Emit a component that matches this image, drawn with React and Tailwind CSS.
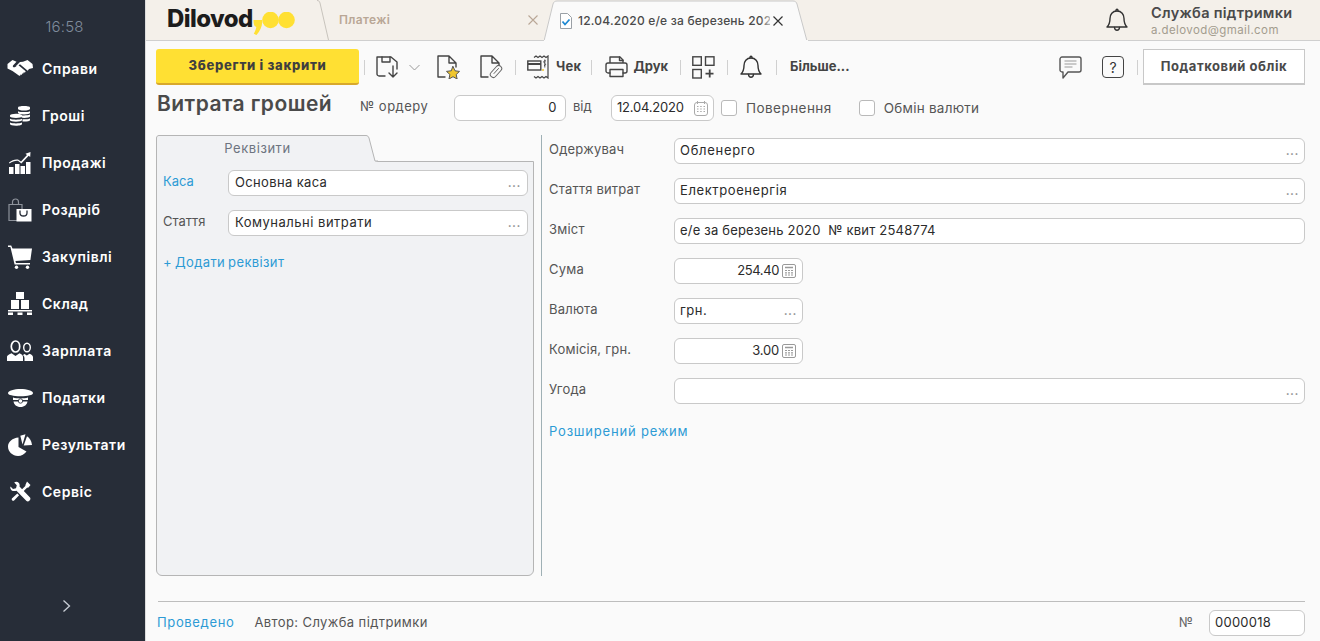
import React from "react";

const S = { fill: "none", stroke: "currentColor", strokeWidth: 1.4, strokeLinecap: "round", strokeLinejoin: "round" };

const Handshake = () => (
  <svg width="26" height="20" viewBox="0 0 26 20" fill="#fff">
    <path d="M.5 5 5.500 1l4 1.800L6 6.500c-.7 1 .5 2.300 1.800 1.700l3.400-2.200 7.200 6.100c.6.8-.3 1.800-1.200 1.300l-.6-.4c.5 1-.5 1.900-1.400 1.400.2 1-.8 1.600-1.700 1.200.1.800-.6 1.300-1.300 1.200L5.500 12 .5 9.500z" />
    <path d="M25.500 5 20.500 1l-4.500 1.800-3 .3-4 4c.8.5 1.500 0 2-.4l2-1.400 7.700 6.400 1.300-1.600 4-1z" />
  </svg>
);
const Coins = () => (
  <svg width="22" height="20" viewBox="0 0 22 20" fill="#fff">
    <path d="M9 1.500C9 .5 12 0 15 0s6 .5 6 1.500V3c0 .8-2.700 1.500-6 1.500S9 3.800 9 3z" />
    <path d="M9 5.200c1.500.6 3.700.9 6 .9s4.700-.3 6-.9v1.800c0 .8-2.700 1.400-6 1.400S9 7.800 9 7zM12 9.300c1 .1 2 .2 3 .2 2.300 0 4.700-.3 6-.9v1.900c0 .8-2.700 1.400-6 1.400-.8 0-1.500 0-2.200-.1zM13.500 13.300h1.500c2.300 0 4.700-.3 6-.9v1.800c0 .8-2.700 1.400-6 1.400h-1.500z" />
    <path d="M1 9.500c0-1 2.700-1.700 6-1.700s6 .7 6 1.700v1c0 .8-2.700 1.400-6 1.400s-6-.6-6-1.400zM1 12.800c1.400.6 3.700.9 6 .9s4.600-.3 6-.9v1.500c0 .8-2.700 1.400-6 1.400s-6-.6-6-1.400zM1 16.500c1.400.6 3.700.9 6 .9s4.600-.3 6-.9v1.500c0 1-2.700 1.700-6 1.700S1 19 1 18z" />
  </svg>
);
const Chart = () => (
  <svg width="22" height="22" viewBox="0 0 22 22" fill="#fff">
    <rect x="0" y="15" width="4.500" height="7" />
    <rect x="6" y="12" width="4.500" height="10" />
    <rect x="11.500" y="14" width="4.500" height="8" />
    <rect x="17" y="10" width="4.500" height="12" />
    <path d="M0 10.500c3-2.500 6-3.500 9-3l3 2 6-6.500-1.500-1.200L21.500 0l-.3 5-1.500-1.200-7.400 7.600-3.300-2.600c-3-.3-5.500.6-8.500 2.700z" />
  </svg>
);
const Bag = () => (
  <svg width="24" height="24" viewBox="0 0 24 24">
    <path d="M1 6.500h13v16H1zM4.500 6.500V4c0-4 6-4 6 0v2.500" fill="none" stroke="#8d929b" strokeWidth="1.200" />
    <rect x="8.500" y="11" width="15" height="12.500" fill="#fff" />
    <path d="M12 12.500v2.500c0 4 7 4 7 0v-2.500" fill="none" stroke="#272d38" strokeWidth="1.300" />
  </svg>
);
const Cart = () => (
  <svg width="24" height="24" viewBox="0 0 24 24" fill="#fff">
    <path d="M0 .5h3.200l1.300 3H24l-1.600 11.500-15 1 .6 2h14v1.500H6.600L2.400 2H0z" />
    <circle cx="8.500" cy="22.300" r="1.700" /><circle cx="19.500" cy="22.300" r="1.700" />
  </svg>
);
const Boxes = () => (
  <svg width="24" height="23" viewBox="0 0 24 23" fill="#fff">
    <rect x="8" y="0" width="8" height="7" />
    <rect x="3" y="8" width="8" height="9" />
    <rect x="13" y="8" width="8" height="9" />
    <rect x="0" y="18" width="24" height="1.500" />
    <path d="M0 20.500h5V23H0zM9.500 20.500h5V23h-5zM19 20.500h5V23h-5z" />
  </svg>
);
const People = () => (
  <svg width="26" height="21" viewBox="0 0 26 21">
    <path d="M0 21v-4c0-2 3-3 4.500-3.800L8.500 16l4-2.800c2 .8 3.500 2 3.500 3.800v4z" fill="#fff" />
    <ellipse cx="8.500" cy="6.500" rx="4.200" ry="5.500" fill="none" stroke="#fff" strokeWidth="1.700" />
    <path d="M17.500 21H26v-4c0-1.500-2-2.500-3.500-3.200l-2.700 1.800-2.300-1.500-1.500.9c1 1 1.500 2 1.500 3z" fill="#fff" />
    <ellipse cx="20" cy="7.500" rx="3.300" ry="4.300" fill="none" stroke="#fff" strokeWidth="1.400" />
  </svg>
);
const Cap = () => (
  <svg width="25" height="18" viewBox="0 0 25 18" fill="#fff">
    <path d="M12.500 0C19 0 25 1.800 25 4.200c0 1.600-5 3-12.500 3S0 5.800 0 4.200C0 1.800 6 0 12.500 0z" />
    <path d="M5 8.500c2 .6 4.700.9 7.500.9s5.500-.3 7.500-.9V11H5zM5.500 12.500h14c-.5 3-3 5.500-7 5.500s-6.500-2.500-7-5.500z" />
    <circle cx="12.500" cy="12" r="2.200" stroke="#272d38" strokeWidth=".8" />
  </svg>
);
const Pie = () => (
  <svg width="24" height="22" viewBox="0 0 24 22" fill="#fff">
    <path d="M10.500 3.500v9.500l8 4.500C16.500 20.200 13.500 22 10 22 4.500 22 0 17.700 0 12.500 0 8 4.500 3.800 10.500 3.500z" />
    <path d="M12.300 1.800 17.500.2 14.500 10.500z" /><path d="M19 2.300c2.700 1.700 4.500 4.500 5 8.700l-8.300.5z" />
  </svg>
);
const Tools = () => (
  <svg width="22" height="22" viewBox="0 0 22 22" fill="#fff">
    <path d="M1.500 5.500 4 8l3-.8.800-3L5.200 1.500C8-.5 11.500 2 10.500 5.500L21 16.500c1.500 2-1.500 5-3.500 3.500L7.500 9.700C3.500 11 .5 8.500 1.500 5.500z" />
    <path d="m18 .5 3.500 3.500-2 2.500-1.500.3-4.500 4.500-1.700-1.700 4.500-4.500.3-1.500zM8.300 12.500l1.800 1.800-5 5.200c-1 1-3.200-.9-2.200-2.100z" />
  </svg>
);

const nav = [
  ["Справи", Handshake], ["Гроші", Coins], ["Продажі", Chart], ["Роздріб", Bag], ["Закупівлі", Cart],
  ["Склад", Boxes], ["Зарплата", People], ["Податки", Cap], ["Результати", Pie], ["Сервіс", Tools],
];

const Sep = ({ c = "" }) => <span className={"w-px h-[15px] bg-[#d0d0d0] shrink-0 " + c} />;

const Dots = () => <span className="ml-auto text-[#8a8a8a] text-[13px] leading-none tracking-[0.5px] pb-[1px] font-medium">...</span>;

const Calc = () => (
  <svg width="14" height="14" viewBox="0 0 14 14" className="shrink-0 text-[#9a9a9a]" fill="none" stroke="currentColor">
    <rect x=".5" y=".5" width="13" height="13" rx="1.500" />
    <path d="M3 3.500h8" strokeWidth="1.500" />
    <path d="M3 6.500h2M6 6.500h2M9 6.500h2M3 8.800h2M6 8.800h2M9 8.800h2M3 11h2M6 11h2M9 11h2" strokeWidth="1.200" />
  </svg>
);

const Field = ({ w, children, className = "", track = "tracking-[0.5px]" }) => (
  <div className={"h-[26px] shrink-0 flex items-center rounded-[6px] border border-[#c9c9c9] bg-white text-[13px] text-[#2b2b2b] " + track + " " + w + " " + className}>{children}</div>
);

const Row = ({ label, children }) => (
  <div className="flex items-center h-[26px] mb-[14px]">
    <span className="w-[125px] shrink-0 text-[13px] text-[#555] tracking-[0.2px] -mt-[3px]">{label}</span>
    {children}
  </div>
);

const Check = ({ label, c, t }) => (
  <label className={"flex items-center " + c}>
    <span className="w-[16px] h-[16px] rounded-[3px] border border-[#b9b9b9] bg-white" />
    <span className={"ml-[9px] text-[13.500px] text-[#555] " + t}>{label}</span>
  </label>
);

const Bell = ({ size = 22 }) => (
  <svg width={size} height={size + 2} viewBox="0 0 22 24" {...S} className="text-[#333] shrink-0">
    <path d="M11 3C6.500 3 4 6.500 4 10.500c0 4.500-1 6.500-3 8.500h20c-2-2-3-4-3-8.500C18 6.500 15.500 3 11 3z" />
    <path d="M10 2.800c-.3-2 2.300-2 2 0M8.500 19.500c.3 3.600 4.700 3.600 5 0" />
  </svg>
);

const Tb = ({ children, c = "" }) => <span className={"flex items-center text-[13px] font-bold text-[#444] shrink-0 " + c}>{children}</span>;

export default function App() {
  return (
    <div className="flex w-[1320px] h-[641px] overflow-hidden bg-[#fafafa] [font-family:Inter,sans-serif]">
      <aside className="w-[145px] shrink-0 h-full bg-[#272d38] flex flex-col">
        <div className="h-[45px] pt-[16px] pr-[16px] text-center text-[15px] leading-[22px] font-light text-[#7f8b9b] tracking-[0.2px]">16:58</div>
        {nav.map(([t, I]) => (
          <div key={t} className="h-[47px] flex items-center shrink-0">
            <span className="w-[42px] pl-[7px] pr-[9px] flex justify-center shrink-0"><I /></span>
            <span className="text-[14px] font-semibold text-white tracking-[0.55px]">{t}</span>
          </div>
        ))}
        <div className="mt-auto mb-[28px] pl-[62px] text-[#c9ced6]">
          <svg width="9" height="14" viewBox="0 0 9 14" fill="none" stroke="currentColor" strokeWidth="1.300"><path d="m1.500 1.500 6 5.500-6 5.500" /></svg>
        </div>
      </aside>

      <main className="flex-1 min-w-0 flex flex-col border-l border-[#dcdcdc]">
        <header className="h-[41px] shrink-0 relative flex bg-[#f4f0ea] border-b border-[#cfcfcf]">
          <div className="relative w-[177px] shrink-0 pl-[21px] flex items-center">
            <span className="text-[24px] font-extrabold text-[#1c1c1c] tracking-[-0.6px] leading-none -mt-[2px]">Dilovod</span>
            <svg width="44" height="24" viewBox="0 0 44 24" className="mt-[8px] shrink-0" fill="#ffe033">
              <path d="M.5 8h8.500c.8 5-1.500 11-5.500 15L.8 21.800C2.300 19 3 17 3.300 15 1 14.500.5 11 .5 8z" />
              <ellipse cx="17.500" cy="8" rx="8.300" ry="8.300" /><ellipse cx="33.500" cy="8" rx="8.300" ry="8.300" />
            </svg>
            <svg width="14" height="41" viewBox="0 0 14 41" className="absolute left-[171px] top-0" fill="none" stroke="#c8c4bd"><path d="M0 .5c2 0 2.500 1 3 2.500l8.500 37" /></svg>
          </div>
          <div className="w-[221px] shrink-0 flex items-center pl-[16px] text-[12px] font-semibold text-[#b9a796] tracking-[0.35px]">
            <span>Платежі</span>
            <svg width="10" height="10" viewBox="0 0 10 10" className="ml-auto mr-[6px] text-[#b9a796]" stroke="currentColor" strokeWidth="1.100"><path d="m.5.5 9 9M9.500.5l-9 9" /></svg>
          </div>
          <div className="relative w-[264px] shrink-0 flex items-center pl-[16px] h-[41px]">
            <svg width="264" height="41" viewBox="0 0 264 41" className="absolute left-0 top-0">
              <path d="M0 41 9 4c.5-2 2-3 4-3h236c2 0 3.500 1 4 3l10 37z" fill="#fafafa" stroke="#c8c8c8" />
              <rect x="0" y="40" width="264" height="1" fill="#fafafa" />
            </svg>
            <svg width="12" height="16" viewBox="0 0 12 16" className="relative shrink-0 mt-[1px]" fill="none">
              <path d="M.5.5h7l4 4v11H.5z" fill="#fff" stroke="#9aa0a6" />
              <path d="m2.500 8.500 2.500 3 4.500-5" stroke="#1e88d2" strokeWidth="1.800" />
            </svg>
            <span className="relative ml-[6px] w-[192px] overflow-hidden whitespace-nowrap text-[12px] font-medium text-[#4a4a4a] tracking-[0.2px]">12.04.2020 е/е за березень 2020</span>
            <span className="absolute left-[216px] top-[10px] w-[16px] h-[20px] bg-gradient-to-r from-transparent to-[#fafafa]" />
            <svg width="10" height="10" viewBox="0 0 10 10" className="relative ml-[3px] mt-[1px] text-[#333]" stroke="currentColor" strokeWidth="1.200"><path d="m.5.5 9 9M9.500.5l-9 9" /></svg>
          </div>
          <div className="ml-auto flex items-center shrink-0 pr-[29px]">
            <Bell />
            <div className="ml-[23px] w-[140px] flex flex-col -mt-[1px]">
              <span className="text-[14.500px] leading-[20px] font-semibold text-[#4a4a4a] tracking-[0.3px] whitespace-nowrap">Служба підтримки</span>
              <span className="text-[11.500px] leading-[14px] text-[#a39c8e] tracking-[0.4px]">a.delovod@gmail.com</span>
            </div>
          </div>
        </header>

        <div className="h-[50px] shrink-0 flex items-start pt-[8px] pl-[10px] pr-[15px]">
          <button className="w-[203px] h-[36px] shrink-0 rounded-[3px] bg-[#ffe033] border-b-2 border-[#d8a82c] text-[13px] font-extrabold text-[#3f3f3f] tracking-[0.7px]">Зберегти і закрити</button>
          <div className="h-[36px] flex items-center flex-1">
            <Sep c="ml-[5px]" />
            <svg width="24" height="24" viewBox="0 0 24 24" {...S} className="ml-[11px] text-[#444] shrink-0">
              <path d="M9 21H3c-1 0-2-1-2-2V2h14l6 5v7" /><path d="M6 2v5h8V2" /><path d="M17 11v11m-4-4 4 4 4-4" />
            </svg>
            <svg width="11" height="7" viewBox="0 0 11 7" fill="none" stroke="#999" className="ml-[9px] shrink-0"><path d="m.5 1 5 5 5-5" /></svg>
            <svg width="23" height="24" viewBox="0 0 23 24" {...S} className="ml-[17px] text-[#444] shrink-0">
              <path d="M8 22H1V1h11l7 7v4M12 1v7h7" />
              <path d="m16 11.500 2 4.300 4.500.6-3.300 3.100.9 4.500-4.100-2.300-4 2.300.9-4.500-3.400-3.100 4.500-.6z" fill="#f0c62d" stroke="#555" strokeWidth="1" />
            </svg>
            <svg width="23" height="24" viewBox="0 0 23 24" {...S} className="ml-[20px] text-[#444] shrink-0">
              <path d="M8 22H1V1h11l7 7v2M12 1v7h7" />
              <rect x="13" y="9.500" width="6" height="14" rx="3" transform="rotate(42 16 16.500)" fill="#fafafa" stroke="#666" strokeWidth="1" />
              <path d="m18.500 13.500-4.500 5" stroke="#666" strokeWidth="1" />
            </svg>
            <Sep c="ml-[12px]" />
            <svg width="24" height="24" viewBox="0 0 24 24" className="ml-[11px] shrink-0" fill="none" stroke="#444" strokeWidth="1.200">
              <path d="M7 2.500 9 1l2 1.500L13 1l2 1.500L17 1l2 1.500L21 1v22l-2-1.500-2 1.500-2-1.500-2 1.500-2-1.500-2 1.500-2-1.500" />
              <rect x=".8" y="6" width="13" height="9" fill="#fafafa" strokeWidth="1.400" /><path d="M1 9h13" strokeWidth="2" />
              <path d="M15 15h2" stroke="#f0c62d" strokeWidth="1.500" />
              <path d="M19 6c-2-1-3 1-1.500 2s1.500 2.500-.5 2.500M17.800 4.500v8" strokeWidth=".9" />
            </svg>
            <Tb c="ml-[5px] tracking-[0.3px]">Чек</Tb>
            <Sep c="ml-[10px]" />
            <svg width="23" height="22" viewBox="0 0 23 22" {...S} className="ml-[13px] text-[#444] shrink-0">
              <path d="M5 7V1h10l3 3v3M5 17H3c-1 0-2-1-2-2V9c0-1 1-2 2-2h17c1 0 2 1 2 2v6c0 1-1 2-2 2h-2" />
              <path d="M5 13.500h13v7H5z" /><path d="M14.500 1v3.500H18" />
            </svg>
            <Tb c="ml-[5px]">Друк</Tb>
            <Sep c="ml-[12px]" />
            <svg width="23" height="23" viewBox="0 0 23 23" fill="none" stroke="#444" strokeWidth="1.400" className="ml-[11px] shrink-0">
              <rect x=".8" y=".8" width="8.500" height="8.500" /><rect x="13.500" y=".8" width="8.500" height="8.500" /><rect x=".8" y="13.500" width="8.500" height="8.500" />
              <path d="M17.700 13.500v8M13.500 17.700h8" strokeWidth="1.800" />
            </svg>
            <Sep c="ml-[12px]" />
            <span className="ml-[12px] flex"><Bell /></span>
            <Sep c="ml-[14px]" />
            <Tb c="ml-[13px]">Більше...</Tb>
            <svg width="23" height="23" viewBox="0 0 23 23" {...S} className="ml-auto text-[#555] shrink-0">
              <path d="M3 1h17c1 0 2 1 2 2v11c0 1-1 2-2 2H9l-5 6v-6H3c-1 0-2-1-2-2V3c0-1 1-2 2-2z" />
              <path d="M6 5h11M6 8h11M6 11h7" stroke="#bbb" />
            </svg>
            <span className="ml-[20px] w-[22px] h-[22px] shrink-0 rounded-[4px] border-[1.500px] border-[#444] flex items-center justify-center text-[14px] text-[#333]">?</span>
            <Sep c="ml-[13px]" />
            <button className="ml-[5px] w-[162px] h-[36px] shrink-0 bg-white border border-[#c8c8c8] border-b-2 text-[13px] font-bold text-[#4a4a4a] tracking-[0.55px]">Податковий облік</button>
          </div>
        </div>

        <div className="h-[44px] shrink-0 flex items-start pt-[4px] pl-[11px]">
          <h1 className="w-[203px] text-[21px] leading-[26px] font-semibold text-[#4a4a4a] tracking-[0.45px] whitespace-nowrap -mt-[4px]">Витрата грошей</h1>
          <span className="w-[94px] h-[24px] flex items-center text-[13px] text-[#555] tracking-[0.5px]">№ ордеру</span>
          <Field w="w-[112px]" className="justify-end pr-[8px]">0</Field>
          <span className="ml-[7px] w-[38px] h-[24px] flex items-center text-[13px] text-[#555]">від</span>
          <Field w="w-[103px]" className="pl-[5px]" track="tracking-[-0.2px]">
            12.04.2020
            <svg width="14" height="15" viewBox="0 0 14 15" fill="none" stroke="#aaa" className="ml-auto mr-[5px]">
              <rect x=".5" y="1.500" width="13" height="13" rx="2.500" />
              <path d="M3.500 0v3M10.500 0v3" />
              <path d="M3 5.500h1.500M6.200 5.500h1.500M9.500 5.500H11M3 8h1.500M6.200 8h1.500M9.500 8H11M3 10.500h1.500M6.200 10.500h1.500M9.500 10.500H11" strokeWidth="1.200" />
            </svg>
          </Field>
          <Check label="Повернення" c="ml-[7px] h-[26px]" t="tracking-[0.45px]" />
          <Check label="Обмін валюти" c="ml-[27px] h-[26px]" t="tracking-[0.25px]" />
        </div>

        <div className="h-[441px] shrink-0 flex pl-[10px] pr-[15px]">
          <section className="relative w-[378px] shrink-0 flex flex-col">
            <div className="relative z-10 h-[27px] w-[222px] -mb-px shrink-0 flex justify-center items-center pr-[19px] text-[13px] text-[#6d7480] tracking-[0.55px]">
              <svg width="222" height="27" viewBox="0 0 222 27" className="absolute left-0 top-0">
                <path d="M.5 27V3C.5 1.500 1.500.5 3 .5h207c1.500 0 2.500 1 3 2.500l6 23 3 1z" fill="#f1f2f4" />
                <path d="M.5 27V3C.5 1.500 1.500.5 3 .5h207c1.500 0 2.500 1 3 2.500l6 23h3" fill="none" stroke="#b5b5b5" />
              </svg>
              <span className="relative">Реквізити</span>
            </div>
            <div className="flex-1 bg-[#f1f2f4] border border-[#b5b5b5] rounded-b-[6px] pt-[8px] pl-[6px] pr-[5px]">
              <div className="flex items-center h-[26px] mb-[14px]">
                <span className="w-[65px] text-[13px] text-[#2d9bd5] -mt-[3px]">Каса</span>
                <Field w="flex-1" className="px-[6px]" track="tracking-[0.35px]">Основна каса<Dots /></Field>
              </div>
              <div className="flex items-center h-[26px] mb-[13px]">
                <span className="w-[65px] text-[13px] text-[#555] -mt-[3px]">Стаття</span>
                <Field w="flex-1" className="px-[6px]">Комунальні витрати<Dots /></Field>
              </div>
              <span className="text-[13px] text-[#2d9bd5] tracking-[0.37px] [word-spacing:-1px]">+ Додати реквізит</span>
            </div>
          </section>
          <div className="w-px ml-[7px] bg-[#9fb0b5] shrink-0" />
          <section className="flex-1 pl-[7px] pt-[3px]">
            <Row label="Одержувач"><Field w="flex-1" className="px-[5px]" track="tracking-[0.7px]">Обленерго<Dots /></Field></Row>
            <Row label="Стаття витрат"><Field w="flex-1" className="px-[5px]" track="tracking-[0.6px]">Електроенергія<Dots /></Field></Row>
            <Row label="Зміст"><Field w="flex-1" className="px-[5px] whitespace-pre" track="tracking-[0.2px]">е/е за березень 2020  № квит 2548774</Field></Row>
            <Row label="Сума"><Field w="w-[129px]" className="justify-end pr-[6px] gap-[3px]" track="tracking-[-0.4px]">254.40<Calc /></Field></Row>
            <Row label="Валюта"><Field w="w-[129px]" className="px-[5px]">грн.<Dots /></Field></Row>
            <Row label="Комісія, грн."><Field w="w-[129px]" className="justify-end pr-[6px] gap-[3px]" track="tracking-[-0.2px]">3.00<Calc /></Field></Row>
            <Row label="Угода"><Field w="flex-1" className="px-[5px]"><Dots /></Field></Row>
            <div className="text-[13px] text-[#2d9bd5] tracking-[0.8px] pt-[4px]">Розширений режим</div>
          </section>
        </div>

        <div className="mt-[25px] ml-[12px] mr-[15px] h-px bg-[#bdbdbd] shrink-0" />
        <footer className="flex items-center pl-[11px] pr-[15px] pt-[8px]">
          <span className="text-[13px] text-[#2d9bd5] tracking-[0.65px]">Проведено</span>
          <span className="ml-[20px] text-[13px] text-[#555] tracking-[0.4px]">Автор: Служба підтримки</span>
          <span className="ml-auto text-[13px] text-[#666]">№</span>
          <Field w="w-[96px]" className="ml-[16px] px-[5px]" track="tracking-[0.25px]">0000018</Field>
        </footer>
      </main>
    </div>
  );
}
